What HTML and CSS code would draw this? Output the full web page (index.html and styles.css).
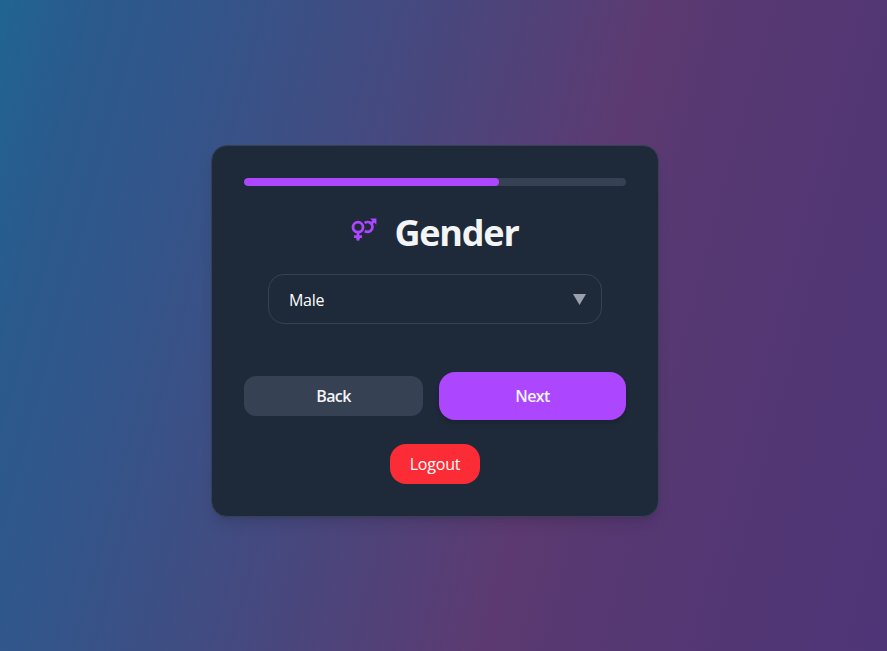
FILE: index.html
```html
<!DOCTYPE html>
<html lang="en">
<head>
<meta charset="utf-8">
<title>Gender</title>
<link rel="stylesheet" href="styles.css">
</head>
<body>
<main class="card">
  <div class="progress"><div class="progress-fill"></div></div>
  <div class="heading">
    <svg class="icon" viewBox="0 0 26 24" fill="none" stroke="currentColor" stroke-width="2.8">
      <circle cx="7" cy="9.2" r="5"/>
      <path d="M7 14V22.6M3 18.7h8M13.6 5a4.9 4.9 0 1 1 .2 8M20.4 5.6l3-3"/>
      <path d="M4 18.7L7 23l3-4.3zM19.2.6h6.2v6.2z" fill="currentColor" stroke="none"/>
    </svg>
    <h1 class="title">Gender</h1>
  </div>
  <div class="select"><span class="value">Male</span><svg class="caret" viewBox="0 0 13 11"><path d="M0 0h13L6.5 11z" fill="currentColor"/></svg></div>
  <div class="actions">
    <button class="button back"><span class="label">Back</span></button>
    <button class="button next"><span class="label">Next</span></button>
  </div>
  <button class="button logout"><span class="label">Logout</span></button>
</main>
</body>
</html>
```
FILE: styles.css
```css
* { box-sizing: border-box; }
body {
  margin: 0;
  min-height: 651px;
  padding: 145px 17px 0 0;
  display: flex;
  justify-content: center;
  align-items: flex-start;
  font: 16px/24px "Segoe UI", "Open Sans", "Noto Sans", sans-serif;
  color: #f3f4f6;
  background: linear-gradient(105deg, #206492 0%, #2b5a8d 9%, #33558a 20%, #444a80 38%, #5c3a71 62%, #553772 75%, #4e3577 100%);
}
.card {
  width: 448px;
  height: 372px;
  padding: 32px;
  display: flex;
  flex-direction: column;
  border: 1px solid #364153;
  border-radius: 16px;
  background: #1e2939;
  box-shadow: 0 10px 15px -3px rgba(0, 0, 0, .1), 0 4px 6px -4px rgba(0, 0, 0, .1);
}
.progress {
  height: 8px;
  border-radius: 4px;
  background: #364153;
  overflow: hidden;
}
.progress-fill {
  width: 66.67%;
  height: 100%;
  border-radius: 4px;
  background: #ad46ff;
}
.heading {
  height: 40px;
  margin-top: 24px;
  display: flex;
  justify-content: center;
  gap: 17px;
}
.icon {
  width: 26px;
  height: 24px;
  margin-top: 8px;
  color: #ad46ff;
}
.title {
  margin: 3px 0 0;
  font-size: 36px;
  line-height: 40px;
  font-weight: 700;
  letter-spacing: -1.2px;
}
.select {
  height: 50px;
  margin: 24px 24px 0;
  padding: 0 15px 0 20px;
  display: flex;
  align-items: center;
  justify-content: space-between;
  border: 1px solid #364153;
  border-radius: 16px;
}
.value {
  padding-top: 1px;
  color: #fff;
  letter-spacing: -.3px;
}
.caret {
  width: 13px;
  height: 11px;
  color: #99a1af;
}
.actions {
  margin-top: 48px;
  display: flex;
  align-items: center;
  gap: 16px;
}
.button {
  padding: 0;
  border: 0;
  font: inherit;
  color: inherit;
}
.label {
  letter-spacing: -.2px;
}
.back {
  width: 179px;
  height: 40px;
  border-radius: 12px;
  background: #364153;
  font-weight: 600;
}
.back .label, .next .label {
  letter-spacing: -.6px;
}
.next {
  width: 187px;
  height: 48px;
  border-radius: 16px;
  background: #ad46ff;
  font-weight: 600;
  box-shadow: 0 4px 6px -1px rgba(0, 0, 0, .1), 0 2px 4px -2px rgba(0, 0, 0, .1);
}
.logout {
  width: 90px;
  height: 40px;
  margin: 24px auto 0;
  border-radius: 16px;
  background: #fb2c36;
  color: #fff;
}
```
